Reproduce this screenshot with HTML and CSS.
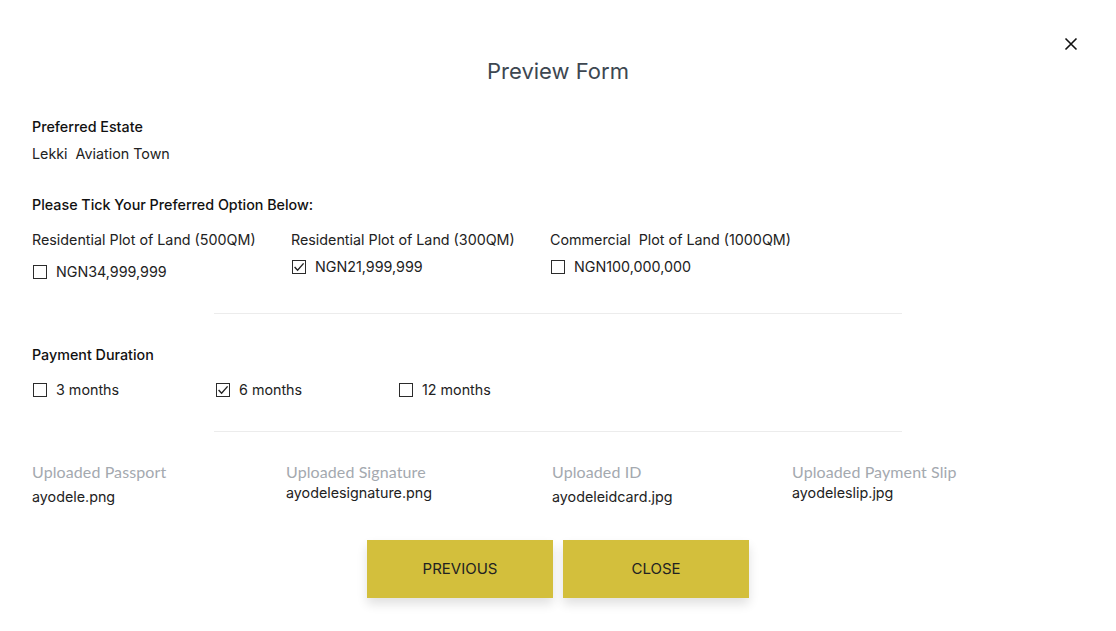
FILE: index.html
```html
<!DOCTYPE html>
<html lang="en">
<head>
<meta charset="utf-8">
<title>Preview Form</title>
<link rel="stylesheet" href="styles.css">
</head>
<body>
<div class="modal">
  <button class="close-x" aria-label="Close">
    <svg width="14" height="14" viewBox="0 0 14 14"><path d="M1.5 1.5 L12.5 12.5 M12.5 1.5 L1.5 12.5" stroke="#111" stroke-width="1.6" fill="none"/></svg>
  </button>
  <h1 class="title">Preview Form</h1>

  <section class="field">
    <div class="field-label">Preferred Estate</div>
    <div class="field-value">Lekki&nbsp; Aviation Town</div>
  </section>

  <section class="options">
    <div class="field-label">Please Tick Your Preferred Option Below:</div>
    <div class="option-grid">
      <div class="option">
        <div class="option-title">Residential Plot of Land (500QM)</div>
        <label class="check check-low"><span class="box"></span>NGN34,999,999</label>
      </div>
      <div class="option">
        <div class="option-title">Residential Plot of Land (300QM)</div>
        <label class="check"><span class="box"><svg width="12" height="12" viewBox="0 0 12 12"><path d="M1.6 6 L4.6 9.2 L10.6 2.4" stroke="#222" stroke-width="1.4" fill="none"/></svg></span>NGN21,999,999</label>
      </div>
      <div class="option">
        <div class="option-title">Commercial&nbsp; Plot of Land (1000QM)</div>
        <label class="check"><span class="box"></span>NGN100,000,000</label>
      </div>
    </div>
  </section>

  <hr class="divider divider-1">

  <section class="duration">
    <div class="field-label">Payment Duration</div>
    <div class="duration-row">
      <label class="check"><span class="box"></span>3 months</label>
      <label class="check"><span class="box"><svg width="12" height="12" viewBox="0 0 12 12"><path d="M1.6 6 L4.6 9.2 L10.6 2.4" stroke="#222" stroke-width="1.4" fill="none"/></svg></span>6 months</label>
      <label class="check"><span class="box"></span>12 months</label>
    </div>
  </section>

  <hr class="divider divider-2">

  <section class="uploads">
    <div class="upload">
      <div class="upload-label">Uploaded Passport</div>
      <div class="upload-value">ayodele.png</div>
    </div>
    <div class="upload">
      <div class="upload-label">Uploaded Signature</div>
      <div class="upload-value upload-value-high">ayodelesignature.png</div>
    </div>
    <div class="upload">
      <div class="upload-label">Uploaded ID</div>
      <div class="upload-value">ayodeleidcard.jpg</div>
    </div>
    <div class="upload">
      <div class="upload-label">Uploaded Payment Slip</div>
      <div class="upload-value upload-value-high">ayodeleslip.jpg</div>
    </div>
  </section>

  <div class="actions">
    <button class="btn">PREVIOUS</button>
    <button class="btn">CLOSE</button>
  </div>
</div>
</body>
</html>
```
FILE: styles.css
```css
* { box-sizing: border-box; }
html, body { margin: 0; padding: 0; background: #fff; }
body {
  font-family: "Inter", "Noto Sans", sans-serif;
  color: #222;
  font-size: 14.3px;
  width: 1116px;
  height: 631px;
  overflow: hidden;
}
.modal {
  position: relative;
  padding: 57px 32px 0 32px;
  height: 631px;
}
.close-x {
  position: absolute;
  top: 37px;
  left: 1064px;
  width: 14px;
  height: 14px;
  padding: 0;
  border: 0;
  background: none;
  display: flex;
}
.title {
  margin: 0;
  text-align: center;
  font-size: 22px;
  line-height: 28px;
  font-weight: 400;
  color: #3d4751;
}
.field { margin-top: 32px; }
.field-label {
  font-weight: 500;
  line-height: 20px;
  color: #111;
}
.field-value {
  margin-top: 7px;
  line-height: 20px;
}
.options { margin-top: 31px; }
.option-grid {
  display: grid;
  grid-template-columns: 259px 259px 259px;
  margin-top: 15px;
}
.option-title { line-height: 20px; }
.check {
  display: flex;
  align-items: center;
  gap: 9px;
  line-height: 20px;
  height: 20px;
  margin-top: 7px;
  padding-left: 1px;
}
.check-low { margin-top: 12px; }
.box {
  width: 14px;
  height: 14px;
  border: 1px solid #2b2b2b;
  display: flex;
  align-items: center;
  justify-content: center;
  flex: none;
}
.divider {
  border: 0;
  height: 1px;
  background: #ececec;
  width: 688px;
  margin: 0 auto;
}
.divider-1 { margin-top: 31px; }
.duration { margin-top: 31px; }
.duration-row {
  display: grid;
  grid-template-columns: 183px 183px 183px;
  margin-top: 15px;
}
.duration-row .check { margin-top: 0; }
.divider-2 { margin-top: 31px; }
.uploads {
  display: grid;
  grid-template-columns: 254px 266px 240px 240px;
  margin-top: 30px;
}
.upload-label {
  font-family: "Lato", "Open Sans", sans-serif;
  color: #a4a9af;
  font-size: 16px;
  letter-spacing: 0.1px;
  line-height: 20px;
}
.upload-value {
  margin-top: 5px;
  line-height: 20px;
}
.upload-value-high { margin-top: 1px; }
.actions {
  display: flex;
  justify-content: center;
  gap: 10px;
  margin-top: 33px;
}
.btn {
  width: 186px;
  height: 58px;
  border: 0;
  background: #d3bf3c;
  color: #222;
  font-family: "Inter", "Noto Sans", sans-serif;
  font-size: 15px;
  padding-bottom: 2px;
  box-shadow: 0 6px 10px rgba(0,0,0,0.12);
  cursor: pointer;
}
```
